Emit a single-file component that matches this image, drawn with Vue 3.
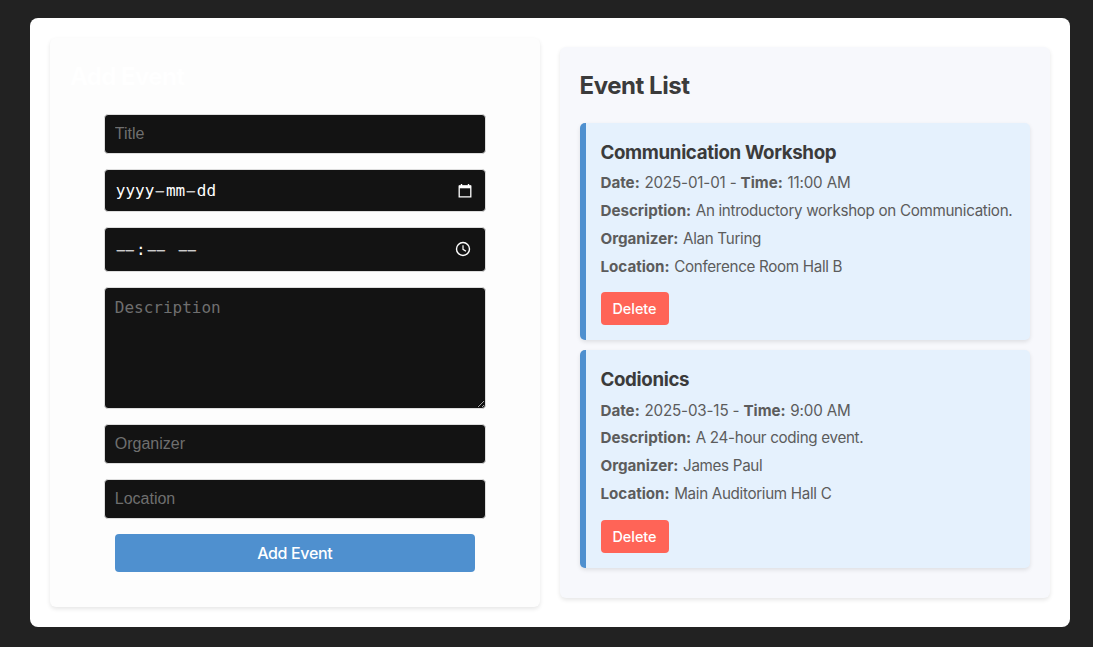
<script setup>
const events = [
  { title: 'Communication Workshop', date: '2025-01-01', time: '11:00 AM', description: 'An introductory workshop on Communication.', organizer: 'Alan Turing', location: 'Conference Room Hall B' },
  { title: 'Codionics', date: '2025-03-15', time: '9:00 AM', description: 'A 24-hour coding event.', organizer: 'James Paul', location: 'Main Auditorium Hall C' }
]
</script>

<template>
  <main class="container">
    <section class="panel form-panel">
      <h2>Add Event</h2>
      <form class="form">
        <input class="field" type="text" placeholder="Title" />
        <div class="field date">
          <div class="value"><span class="part">yyyy</span><span class="dash"><i>–</i></span><span class="part">mm</span><span class="dash"><i>–</i></span><span class="part">dd</span></div>
          <svg width="14" height="16" viewBox="0 0 14 16" fill="none" stroke="#fff"><path d="M1.2 3.2h11.6v10.6H1.2z" stroke-width="1.3" /><path d="M1 3.8h12" stroke-width="3" /><path d="M3.5 1v2M10.5 1v2" stroke-width="1.4" /></svg>
        </div>
        <div class="field time">
          <div class="value"><span class="part dash"><i>–</i><i>–</i></span>:<span class="part dash"><i>–</i><i>–</i></span>&nbsp;<span class="part dash"><i>–</i><i>–</i></span></div>
          <svg width="16" height="16" viewBox="0 0 16 16" fill="none" stroke="#fff"><circle cx="8" cy="8" r="6.5" stroke-width="1.4" /><path d="M8 4.2V8.3l3 1.9" stroke-width="1.2" /></svg>
        </div>
        <textarea class="field" placeholder="Description"></textarea>
        <input class="field" type="text" placeholder="Organizer" />
        <input class="field" type="text" placeholder="Location" />
        <button class="add" type="button">Add Event</button>
      </form>
    </section>
    <section class="panel list-panel">
      <h2>Event List</h2>
      <ul>
        <li v-for="e in events" :key="e.title">
          <h3>{{ e.title }}</h3>
          <p class="when"><strong>Date:</strong> {{ e.date }} - <strong>Time:</strong> {{ e.time }}</p>
          <p><strong>Description:</strong> {{ e.description }}</p>
          <p><strong>Organizer:</strong> {{ e.organizer }}</p>
          <p><strong>Location:</strong> {{ e.location }}</p>
          <button class="delete" type="button">Delete</button>
        </li>
      </ul>
    </section>
  </main>
</template>

<style>
body { background: #222; }
</style>

<style scoped>
.container {
  box-sizing: border-box;
  width: 1040px;
  height: 609px;
  margin: 18px 0 0 30px;
  padding: 20px;
  display: flex;
  gap: 20px;
  align-items: flex-start;
  background: #fff;
  border-radius: 8px;
  font-family: Inter, sans-serif;
}
.panel {
  box-sizing: border-box;
  width: 490px;
  padding: 20px;
  border-radius: 6px;
  box-shadow: 0 2px 4px rgba(0, 0, 0, 0.1);
}
.form-panel { height: 569px; background: #fdfdfd; }
.list-panel { height: 551px; width: 491px; margin: 9px 0 0 0; background: #f7f8fc; }
h2 {
  margin: 0;
  font-size: 24px;
  line-height: 38px;
  font-weight: 650;
  letter-spacing: -0.45px;
  color: #3b3b3b;
}
.form-panel h2 { color: #fff; letter-spacing: -0.6px; }
.form {
  width: 382px;
  margin: 18px auto 0;
  display: flex;
  flex-direction: column;
  gap: 15px;
}
.field {
  box-sizing: border-box;
  width: 382px;
  height: 40px;
  margin: 0;
  padding: 10px;
  border: 1px solid #ddd;
  border-radius: 4px;
  background: #131313;
  color: #fff;
  font: 16px "Liberation Sans", sans-serif;
}
.field::placeholder { color: #6f6f6f; opacity: 1; }
textarea.field {
  height: 122px;
  font: 16px "DejaVu Sans Mono", monospace;
  color-scheme: dark;
  resize: both;
}
.date, .time {
  display: flex;
  align-items: center;
  justify-content: space-between;
  font: 16px "DejaVu Sans Mono", monospace;
}
.date { height: 43px; padding-right: 13px; }
.time { height: 45px; }
.time svg { margin: 0 3.5px 1px 0; }
.part { padding: 0 1px; }
.dash { color: #ccc; -webkit-text-stroke: 0.3px #ccc; }
.dash i { display: inline-block; font-style: normal; transform: scaleX(0.84); }
button { border: 0; margin: 0; padding: 0; color: #fff; border-radius: 4px; font-family: Inter, sans-serif; font-weight: 500; }
.add { width: 360px; height: 38px; align-self: center; background: #4f90cf; font-size: 16px; font-weight: 470; letter-spacing: -0.34px; }
ul { list-style: none; margin: 18px 0 0; padding: 0; display: flex; flex-direction: column; gap: 10px; }
li {
  box-sizing: border-box;
  height: 217px;
  padding: 15px;
  border-left: 6px solid #4f90cf;
  border-radius: 5px;
  background: #e5f1fd;
  box-shadow: 0 2px 4px rgba(0, 0, 0, 0.1);
}
li + li { height: 218px; }
h3 { margin: 0 0 2px; font-size: 18.72px; line-height: 29px; font-weight: 650; color: #3b3b3b; letter-spacing: -0.35px; }
li + li h3 { margin-bottom: 3px; }
li + li .when { line-height: 27px; }
li + li .delete { margin-top: 12px; }
p { margin: 0; font-size: 15.2px; line-height: 27.9px; color: #5c5c5c; white-space: nowrap; letter-spacing: -0.32px; }
.when { letter-spacing: -0.17px; }
strong { margin-right: 0.7px; font-weight: 650; letter-spacing: -0.03px; }
.delete { display: block; width: 68px; height: 33px; margin-top: 11px; background: #ff6457; font-size: 14.4px; font-weight: 450; letter-spacing: 0; }
</style>
